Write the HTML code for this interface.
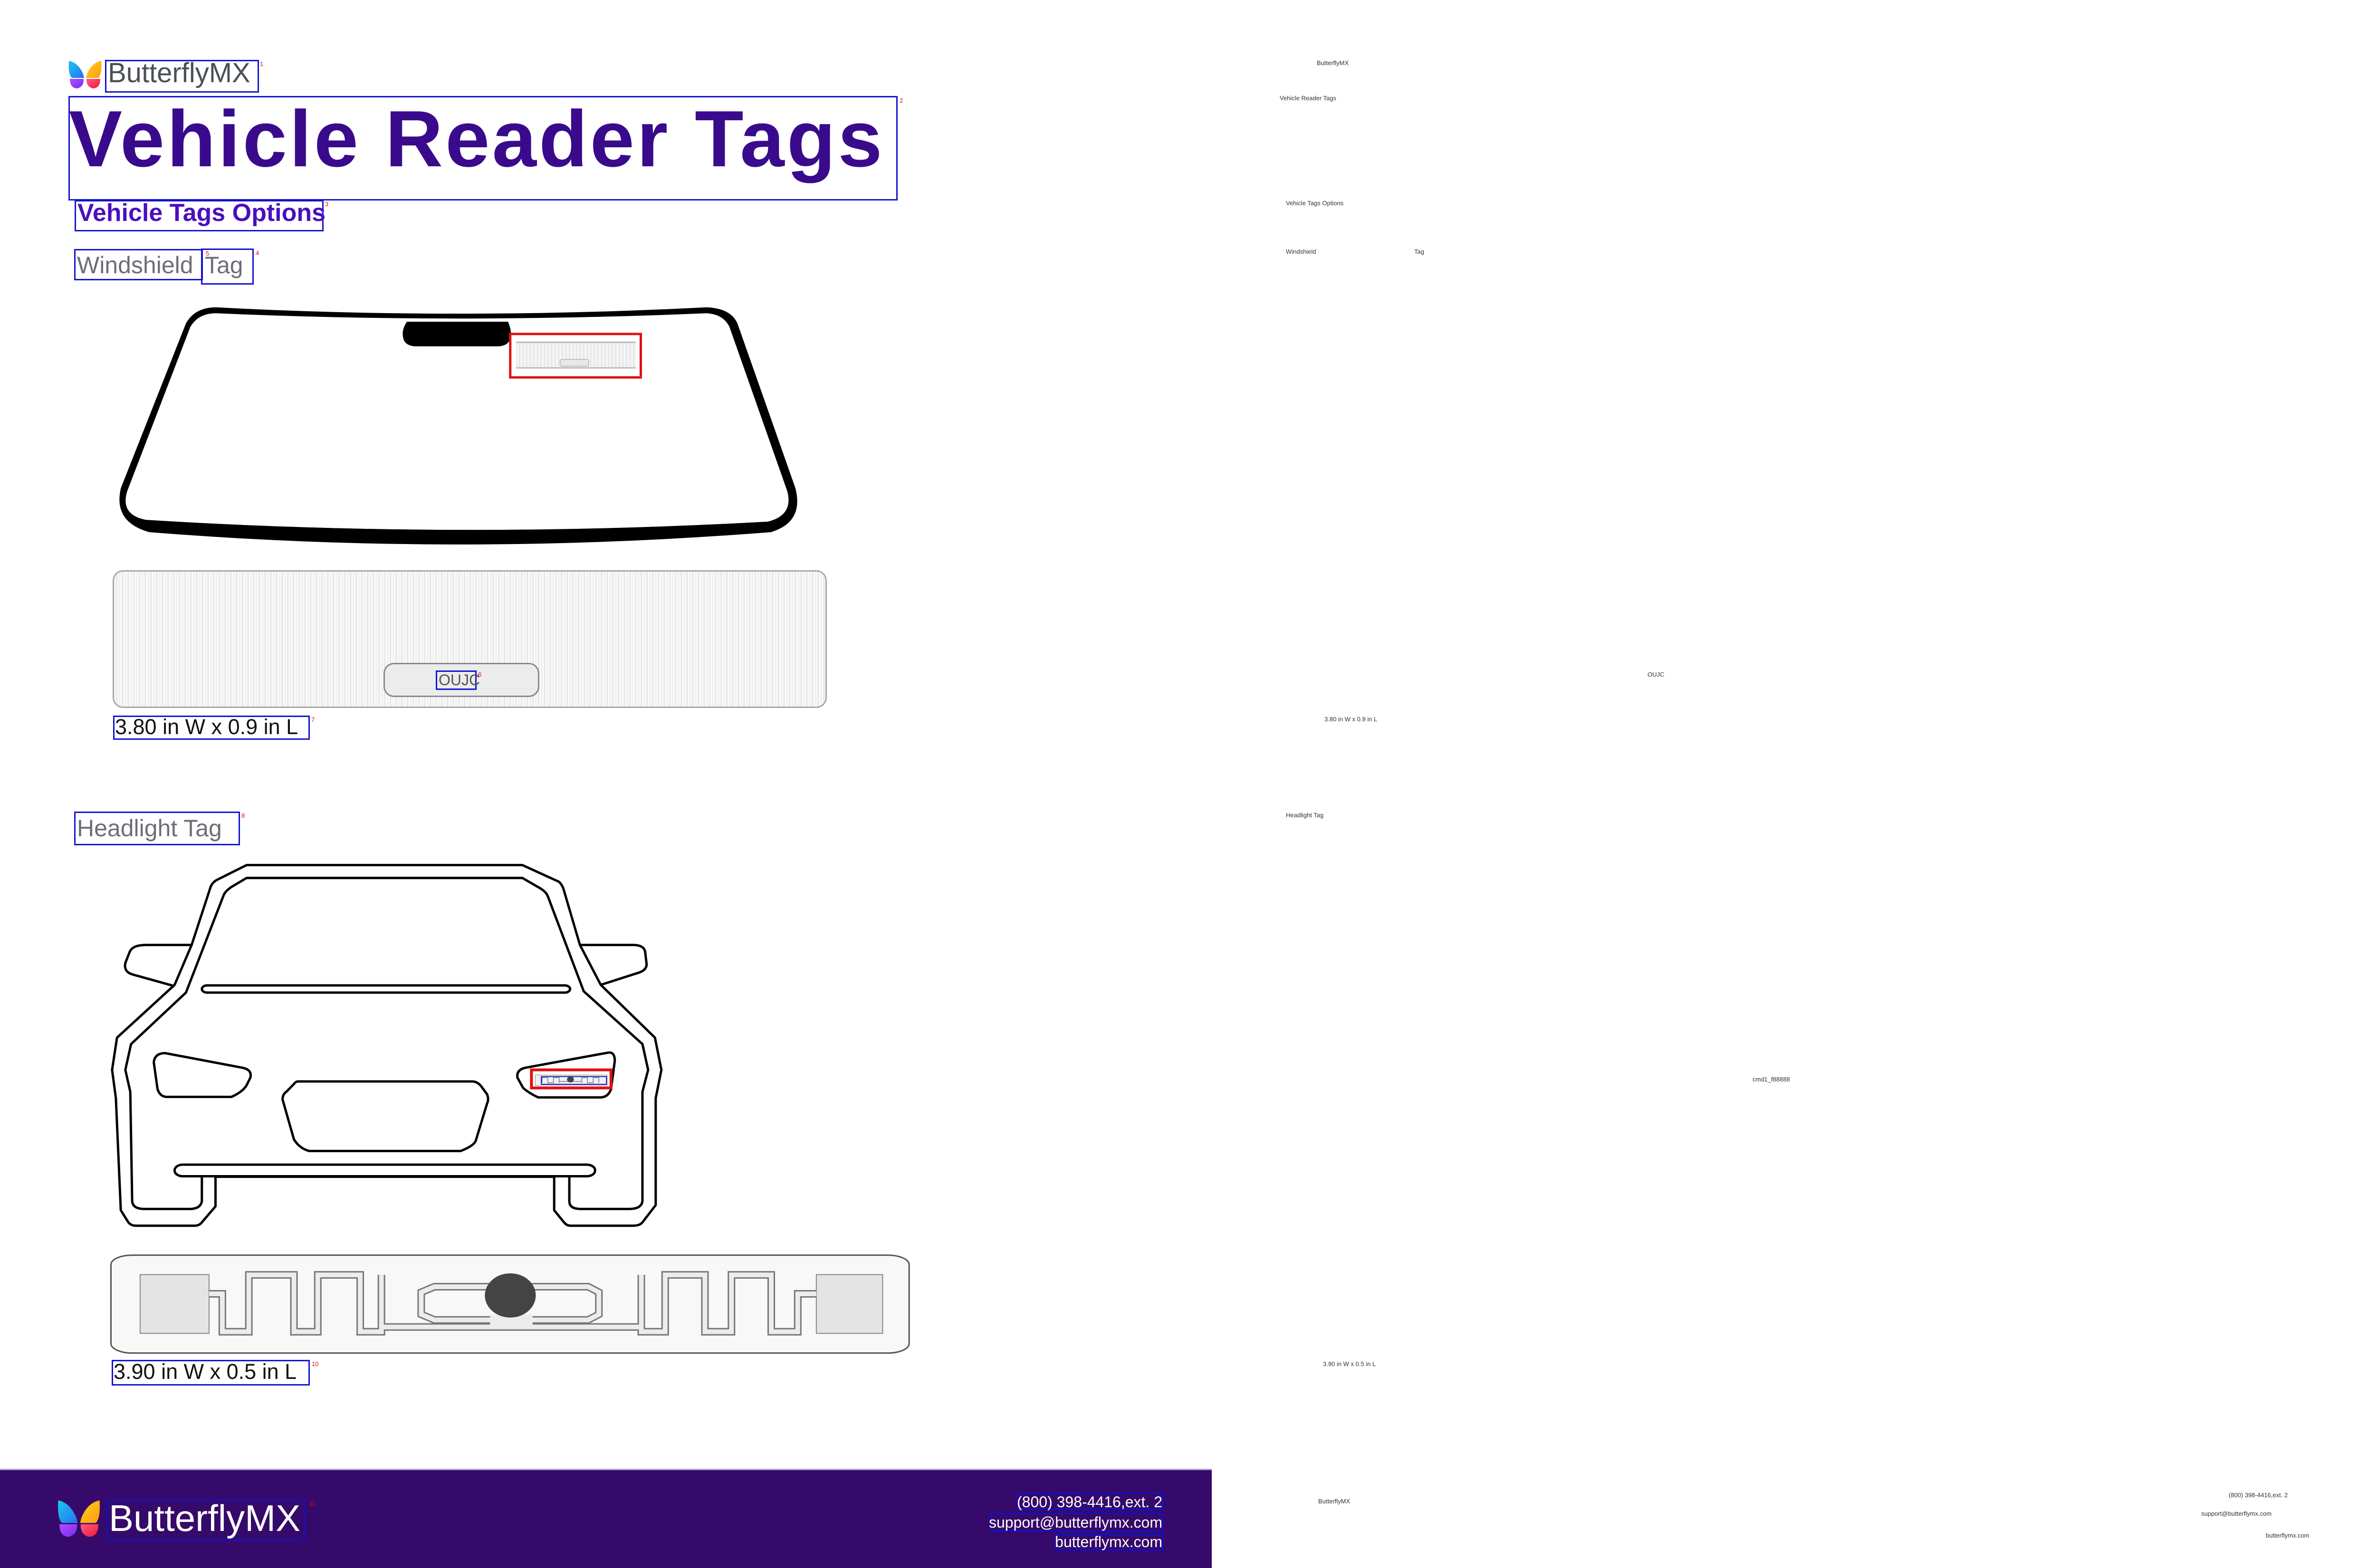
<!DOCTYPE html>
<html><head><meta charset="utf-8">
<style>
html,body{margin:0;padding:0;background:#fff;}
body{width:5100px;height:3300px;position:relative;overflow:hidden;font-family:"Liberation Sans",Arial,sans-serif;}
.a{position:absolute;white-space:nowrap;line-height:1;}
.bx{position:absolute;border:3px solid #1414d2;box-sizing:border-box;}
.n{position:absolute;color:#e01010;font-size:13px;line-height:1;}
.t{position:absolute;font-size:13px;color:#333;white-space:nowrap;line-height:1;}
</style></head><body>

<!-- header logo -->
<svg class="a" style="left:143px;top:126px" width="72" height="62" viewBox="0 0 72 62">
<defs>
<linearGradient id="g1" x1="0" y1="0" x2="1" y2="1"><stop offset="0" stop-color="#18c8f0"/><stop offset="1" stop-color="#2a6ff0"/></linearGradient>
<linearGradient id="g2" x1="0" y1="0" x2="1" y2="1"><stop offset="0" stop-color="#ffd21a"/><stop offset="1" stop-color="#ff9a10"/></linearGradient>
<linearGradient id="g3" x1="0" y1="0" x2="1" y2="1"><stop offset="0" stop-color="#b04cff"/><stop offset="1" stop-color="#7a2cf0"/></linearGradient>
<linearGradient id="g4" x1="0" y1="0" x2="1" y2="1"><stop offset="0" stop-color="#ff5a8a"/><stop offset="1" stop-color="#f01830"/></linearGradient>
</defs>
<path d="M2,2 Q22,6 32,30 L34,38 L8,38 Q0,30 2,2Z" fill="url(#g1)"/>
<path d="M70,2 Q50,6 40,30 L38,38 L64,38 Q72,30 70,2Z" fill="url(#g2)"/>
<path d="M4,40 L33,40 Q34,56 20,60 Q4,60 4,40Z" fill="url(#g3)"/>
<path d="M68,40 L39,40 Q38,56 52,60 Q68,60 68,40Z" fill="url(#g4)"/>
</svg>
<div class="bx" style="left:221px;top:126px;width:324px;height:69px"></div>
<div class="n" style="left:547px;top:128px">1</div>
<div class="a" style="left:227px;top:125px;font-size:58px;color:#4a5058">ButterflyMX</div>

<!-- title -->
<div class="bx" style="left:144px;top:202px;width:1745px;height:220px"></div>
<div class="n" style="left:1893px;top:205px">2</div>
<div class="a" style="left:145px;top:208px;font-size:168px;font-weight:bold;color:#390b8c;letter-spacing:5px">Vehicle Reader Tags</div>

<!-- subtitle -->
<div class="bx" style="left:157px;top:421px;width:524px;height:66px"></div>
<div class="n" style="left:684px;top:423px">3</div>
<div class="a" style="left:163px;top:422px;font-size:52px;font-weight:bold;color:#4a0fbf">Vehicle Tags Options</div>

<!-- windshield tag -->
<div class="bx" style="left:156px;top:524px;width:271px;height:66px"></div>
<div class="bx" style="left:423px;top:523px;width:111px;height:76px"></div>
<div class="n" style="left:538px;top:526px">4</div>
<div class="n" style="left:433px;top:527px">5</div>
<div class="a" style="left:162px;top:533px;font-size:50px;color:#6e6e78">Windshield</div>
<div class="a" style="left:431px;top:533px;font-size:50px;color:#6e6e78">Tag</div>

<!-- windshield drawing -->
<svg class="a" style="left:230px;top:620px" width="1470" height="560" viewBox="0 0 1568 1568" preserveAspectRatio="none">
<defs><pattern id="st" width="8" height="10" patternUnits="userSpaceOnUse"><rect width="8" height="10" fill="#f4f4f4"/><rect width="2" height="10" fill="#e2e2e2"/></pattern></defs>
<path d="M240,75 Q780,150 1340,75 Q1395,80 1410,170 L1540,1140 Q1560,1340 1485,1400 Q780,1545 90,1400 Q8,1340 26,1140 L172,170 Q192,75 240,75Z" fill="#000"/>
<path d="M240,110 Q780,172 1340,110 Q1378,115 1392,190 L1522,1160 Q1536,1300 1478,1338 Q780,1440 84,1328 Q24,1300 40,1160 L182,190 Q200,110 240,110Z" fill="#fff"/>
<path d="M84,1328 L84,1365 Q780,1470 1478,1362 L1478,1338 Q780,1440 84,1328Z" fill="#000"/>
<path d="M668,160 L895,160 Q905,220 900,260 Q895,305 870,305 L690,305 Q665,305 660,260 Q655,210 668,160Z" fill="#000"/>
<rect x="913" y="280" width="269" height="152" fill="url(#st)"/>
<line x1="913" y1="281" x2="1182" y2="281" stroke="#bbb" stroke-width="3" vector-effect="non-scaling-stroke"/>
<line x1="913" y1="432" x2="1182" y2="432" stroke="#bbb" stroke-width="3" vector-effect="non-scaling-stroke"/>
<rect x="1012" y="382" width="64" height="40" rx="6" fill="#e8e8e8" stroke="#999" stroke-width="1" vector-effect="non-scaling-stroke"/>
<rect x="900" y="232" width="293" height="256" fill="none" stroke="#e01010" stroke-width="5" vector-effect="non-scaling-stroke"/>
</svg>

<!-- windshield tag image -->
<div class="a" style="left:237px;top:1200px;width:1503px;height:290px;box-sizing:border-box;border:3px solid #a8a8a8;border-radius:22px;background:repeating-linear-gradient(90deg,#f6f6f6 0 5px,#e3e3e3 5px 7px,#f9f9f9 7px 11px,#e8e8e8 11px 12px)"></div>
<div class="a" style="left:807px;top:1395px;width:328px;height:72px;box-sizing:border-box;border:3px solid #8a8a8a;border-radius:22px;background:#ececec"></div>
<div class="bx" style="left:917px;top:1411px;width:86px;height:41px"></div>
<div class="n" style="left:1006px;top:1413px">6</div>
<div class="a" style="left:923px;top:1415px;font-size:32px;color:#555">OUJC</div>

<div class="bx" style="left:238px;top:1506px;width:414px;height:51px"></div>
<div class="n" style="left:655px;top:1508px">7</div>
<div class="a" style="left:242px;top:1507px;font-size:45px;color:#111">3.80 in W x 0.9 in L</div>

<!-- headlight tag -->
<div class="bx" style="left:156px;top:1708px;width:349px;height:71px"></div>
<div class="n" style="left:508px;top:1710px">8</div>
<div class="a" style="left:162px;top:1718px;font-size:50px;color:#6e6e78">Headlight Tag</div>

<!-- car -->
<svg class="a" style="left:200px;top:1780px" width="1250" height="850" viewBox="0 0 1568 1568" preserveAspectRatio="none">
<g fill="none" stroke="#000" stroke-width="5" vector-effect="non-scaling-stroke" stroke-linejoin="round">
<path vector-effect="non-scaling-stroke" d="M400,75 L1128,75 L1225,140 Q1235,155 1238,175 L1280,385 L1335,540 L1478,745 L1495,870 L1480,980 L1480,1395 L1445,1462 Q1438,1475 1420,1475 L1255,1475 Q1245,1475 1238,1462 L1212,1415 L1212,1285 L318,1285 L318,1400 L282,1462 Q275,1475 262,1475 L108,1475 Q95,1475 88,1462 L68,1415 L55,980 L45,870 L58,745 L210,540 L255,385 L305,160 Q310,140 325,130 Z"/>
<path vector-effect="non-scaling-stroke" d="M282,1285 L282,1380 Q278,1410 250,1410 L130,1410 Q100,1410 98,1380 L93,955 L80,870 L95,770 L240,570 L340,190 Q345,175 360,160 L400,125 L1128,125 L1175,165 Q1190,178 1195,195 L1290,565 L1445,770 L1460,870 L1445,955 L1445,1380 Q1442,1410 1410,1410 L1282,1410 Q1252,1410 1252,1380 L1252,1285"/>
<path vector-effect="non-scaling-stroke" d="M255,385 L135,385 Q100,385 92,410 L80,455 Q75,490 100,500 L210,545"/>
<path vector-effect="non-scaling-stroke" d="M1280,385 L1420,385 Q1448,385 1452,410 L1456,460 Q1456,485 1430,495 L1335,540"/>
<rect vector-effect="non-scaling-stroke" x="282" y="542" width="972" height="28" rx="14" fill="#fff"/>
<rect vector-effect="non-scaling-stroke" x="210" y="1238" width="1110" height="45" rx="22" fill="#fff"/>
<path vector-effect="non-scaling-stroke" d="M185,805 L390,862 Q415,870 410,900 L400,930 Q390,955 360,975 L190,975 Q172,975 165,945 L155,840 Q158,805 185,805Z"/>
<path vector-effect="non-scaling-stroke" d="M1355,803 L1135,862 Q1112,870 1115,900 L1130,940 Q1145,960 1170,977 L1335,977 Q1355,975 1362,945 L1372,835 Q1372,800 1355,803Z"/>
<path vector-effect="non-scaling-stroke" d="M535,915 L995,915 Q1010,915 1020,935 L1035,965 Q1040,985 1035,1000 L1005,1145 Q1000,1165 965,1185 L565,1185 Q540,1175 525,1140 L495,985 Q495,965 505,955 L525,925 Q530,915 535,915Z"/>
</g>
<rect x="1162" y="890" width="190" height="40" fill="#f2f2f2" stroke="#888" stroke-width="1" vector-effect="non-scaling-stroke"/>
<path d="M1180,920 L1180,900 L1195,900 L1195,920 L1210,920 L1210,900 L1225,900 L1225,920 M1285,920 L1285,900 L1300,900 L1300,920 L1315,920 L1315,900 L1330,900 L1330,920 M1225,915 L1285,915" fill="none" stroke="#777" stroke-width="1.5" vector-effect="non-scaling-stroke"/>
<ellipse cx="1255" cy="907" rx="9" ry="12" fill="#444"/>
<rect x="1178" y="896" width="172" height="30" fill="none" stroke="#1414d2" stroke-width="2" vector-effect="non-scaling-stroke"/>
<rect x="1152" y="870" width="210" height="70" fill="none" stroke="#e01010" stroke-width="6" vector-effect="non-scaling-stroke"/>
</svg>

<!-- headlight tag image -->
<svg class="a" style="left:200px;top:2620px" width="1750" height="320" viewBox="0 0 1568 963" preserveAspectRatio="none">
<rect x="30" y="65" width="1505" height="620" rx="40" ry="60" fill="#f8f8f8" stroke="#555" stroke-width="3" vector-effect="non-scaling-stroke"/>
<rect x="85" y="188" width="130" height="372" fill="#e4e4e4" stroke="#888" stroke-width="2" vector-effect="non-scaling-stroke"/>
<rect x="1360" y="188" width="125" height="372" fill="#e4e4e4" stroke="#888" stroke-width="2" vector-effect="non-scaling-stroke"/>
<g fill="none" stroke-linejoin="miter">
<path d="M215,310 L240,310 L240,550 L290,550 L290,190 L375,190 L375,550 L420,550 L420,190 L500,190 L500,550 L540,550 L540,190 M540,520 L1030,520 M1360,310 L1325,310 L1325,550 L1275,550 L1275,190 L1200,190 L1200,550 L1150,550 L1150,190 L1075,190 L1075,550 L1030,550 L1030,190 M640,265 L930,265 L950,300 L950,440 L930,475 L640,475 L615,440 L615,300 Z" stroke="#777" stroke-width="16" vector-effect="non-scaling-stroke"/>
<path d="M215,310 L240,310 L240,550 L290,550 L290,190 L375,190 L375,550 L420,550 L420,190 L500,190 L500,550 L540,550 L540,190 M540,520 L1030,520 M1360,310 L1325,310 L1325,550 L1275,550 L1275,190 L1200,190 L1200,550 L1150,550 L1150,190 L1075,190 L1075,550 L1030,550 L1030,190 M640,265 L930,265 L950,300 L950,440 L930,475 L640,475 L615,440 L615,300 Z" stroke="#ececec" stroke-width="10" vector-effect="non-scaling-stroke"/>
</g>
<rect x="745" y="440" width="80" height="90" fill="#ececec"/>
<ellipse cx="783" cy="320" rx="48" ry="140" fill="#444"/>
</svg>

<div class="bx" style="left:235px;top:2862px;width:417px;height:54px"></div>
<div class="n" style="left:656px;top:2864px">10</div>
<div class="a" style="left:239px;top:2864px;font-size:45px;color:#111">3.90 in W x 0.5 in L</div>

<!-- footer -->
<div class="a" style="left:0;top:3091px;width:2550px;height:3px;background:#b9a6d6"></div>
<div class="a" style="left:0;top:3094px;width:2550px;height:206px;background:#360a6a"></div>
<svg class="a" style="left:120px;top:3155px" width="92" height="82" viewBox="0 0 72 62" preserveAspectRatio="none">
<path d="M2,2 Q22,6 32,30 L34,38 L8,38 Q0,30 2,2Z" fill="url(#g1)"/>
<path d="M70,2 Q50,6 40,30 L38,38 L64,38 Q72,30 70,2Z" fill="url(#g2)"/>
<path d="M4,40 L33,40 Q34,56 20,60 Q4,60 4,40Z" fill="url(#g3)"/>
<path d="M68,40 L39,40 Q38,56 52,60 Q68,60 68,40Z" fill="url(#g4)"/>
</svg>
<div class="bx" style="left:225px;top:3156px;width:417px;height:86px;border-color:#1010c8"></div>
<div class="n" style="left:650px;top:3158px">11</div>
<div class="a" style="left:229px;top:3156px;font-size:78px;color:#fff">ButterflyMX</div>

<div class="bx" style="left:2140px;top:3141px;width:308px;height:36px;border-color:#1010c8"></div>
<div class="bx" style="left:2085px;top:3184px;width:363px;height:40px;border-color:#1010c8"></div>
<div class="bx" style="left:2221px;top:3228px;width:227px;height:36px;border-color:#1010c8"></div>
<div class="a" style="right:2654px;top:3145px;font-size:32px;color:#fff;text-align:right">(800) 398-4416,ext. 2</div>
<div class="a" style="right:2654px;top:3188px;font-size:32px;color:#fff;text-align:right">support@butterflymx.com</div>
<div class="a" style="right:2654px;top:3229px;font-size:32px;color:#fff;text-align:right">butterflymx.com</div>

<!-- right side hidden text layer -->
<div class="t" style="left:2771px;top:126px">ButterflyMX</div>
<div class="t" style="left:2693px;top:200px">Vehicle Reader Tags</div>
<div class="t" style="left:2706px;top:421px">Vehicle Tags Options</div>
<div class="t" style="left:2706px;top:523px">Windshield</div>
<div class="t" style="left:2976px;top:523px">Tag</div>
<div class="t" style="left:3467px;top:1413px">OUJC</div>
<div class="t" style="left:2787px;top:1507px">3.80 in W x 0.9 in L</div>
<div class="t" style="left:2706px;top:1709px">Headlight Tag</div>
<div class="t" style="left:3688px;top:2265px">cmd1_f88888</div>
<div class="t" style="left:2784px;top:2864px">3.90 in W x 0.5 in L</div>
<div class="t" style="left:2774px;top:3153px">ButterflyMX</div>
<div class="t" style="left:4690px;top:3140px">(800) 398-4416,ext. 2</div>
<div class="t" style="left:4632px;top:3179px">support@butterflymx.com</div>
<div class="t" style="left:4768px;top:3225px">butterflymx.com</div>

</body></html>
